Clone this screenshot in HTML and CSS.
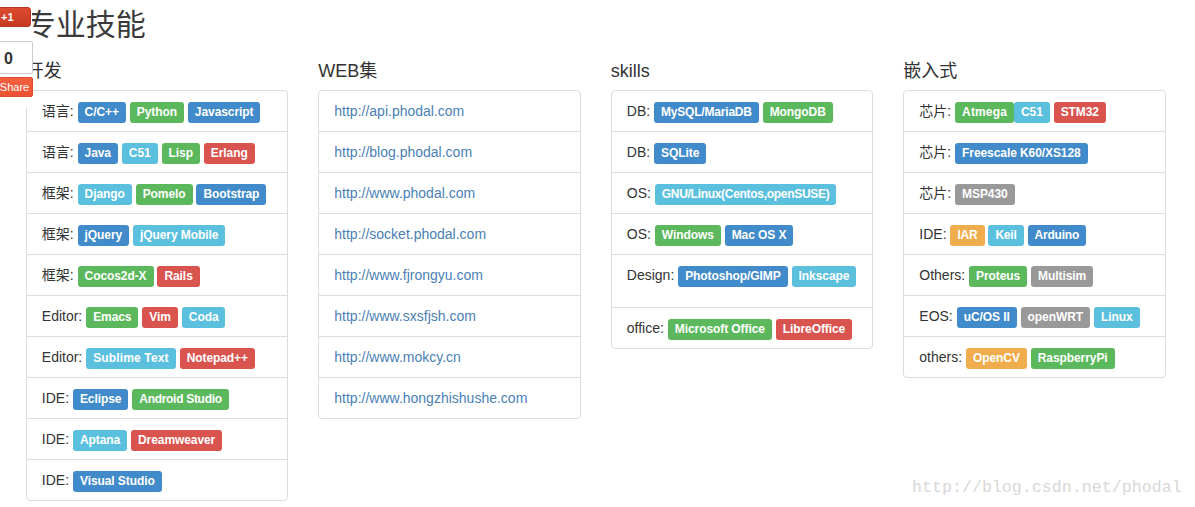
FILE: index.html
```html
<!DOCTYPE html>
<html lang="zh">
<head>
<meta charset="utf-8">
<title>专业技能</title>
<link rel="stylesheet" href="styles.css">
</head>
<body>
<aside class="share">
  <div class="plus">+1</div>
  <div class="count">0</div>
  <div class="sharebtn">Share</div>
</aside>
<main class="page">
  <h1>专业技能</h1>
  <div class="cols">
    <section class="col">
      <h3>开发</h3>
      <ul class="panel">
        <li>语言: <b class="l blue">C/C++</b> <b class="l green">Python</b> <b class="l blue">Javascript</b></li>
        <li>语言: <b class="l blue">Java</b> <b class="l cyan">C51</b> <b class="l green">Lisp</b> <b class="l red">Erlang</b></li>
        <li>框架: <b class="l cyan">Django</b> <b class="l green">Pomelo</b> <b class="l blue">Bootstrap</b></li>
        <li>框架: <b class="l blue">jQuery</b> <b class="l cyan">jQuery Mobile</b></li>
        <li>框架: <b class="l green">Cocos2d-X</b> <b class="l red">Rails</b></li>
        <li>Editor: <b class="l green">Emacs</b> <b class="l red">Vim</b> <b class="l cyan">Coda</b></li>
        <li>Editor: <b class="l cyan wide">Sublime Text</b> <b class="l red">Notepad++</b></li>
        <li>IDE: <b class="l blue">Eclipse</b> <b class="l green tight">Android Studio</b></li>
        <li>IDE: <b class="l cyan">Aptana</b> <b class="l red">Dreamweaver</b></li>
        <li>IDE: <b class="l blue">Visual Studio</b></li>
      </ul>
    </section>
    <section class="col">
      <h3>WEB集</h3>
      <ul class="panel links">
        <li><a href="#">http://api.phodal.com</a></li>
        <li><a href="#">http://blog.phodal.com</a></li>
        <li><a href="#">http://www.phodal.com</a></li>
        <li><a href="#">http://socket.phodal.com</a></li>
        <li><a href="#">http://www.fjrongyu.com</a></li>
        <li><a href="#">http://www.sxsfjsh.com</a></li>
        <li><a href="#">http://www.mokcy.cn</a></li>
        <li><a href="#">http://www.hongzhishushe.com</a></li>
      </ul>
    </section>
    <section class="col">
      <h3>skills</h3>
      <ul class="panel">
        <li>DB: <b class="l blue snug">MySQL/MariaDB</b> <b class="l green">MongoDB</b></li>
        <li>DB: <b class="l blue">SQLite</b></li>
        <li>OS: <b class="l cyan tight">GNU/Linux(Centos,openSUSE)</b></li>
        <li>OS: <b class="l green">Windows</b> <b class="l blue">Mac OS X</b></li>
        <li class="tall">Design: <b class="l blue">Photoshop/GIMP</b> <b class="l cyan">Inkscape</b></li>
        <li>office: <b class="l green">Microsoft Office</b> <b class="l red">LibreOffice</b></li>
      </ul>
    </section>
    <section class="col">
      <h3>嵌入式</h3>
      <ul class="panel">
        <li>芯片: <b class="l green wide">Atmega</b><b class="l cyan">C51</b> <b class="l red">STM32</b></li>
        <li>芯片: <b class="l blue">Freescale K60/XS128</b></li>
        <li>芯片: <b class="l gray">MSP430</b></li>
        <li>IDE: <b class="l orange snug">IAR</b> <b class="l cyan snug">Keil</b> <b class="l blue snug">Arduino</b></li>
        <li>Others: <b class="l green">Proteus</b> <b class="l gray">Multisim</b></li>
        <li>EOS: <b class="l blue">uC/OS II</b> <b class="l gray">openWRT</b> <b class="l cyan">Linux</b></li>
        <li>others: <b class="l orange">OpenCV</b> <b class="l green">RaspberryPi</b></li>
      </ul>
    </section>
  </div>
</main>
<div class="mark">http://blog.csdn.net/phodal</div>
</body>
</html>
```
FILE: styles.css
```css
* { box-sizing: border-box; }
html, body { margin: 0; height: 507px; overflow: hidden; background: #fff; }
body { font: 14px/20px "Liberation Sans", "Noto Sans CJK SC", sans-serif; color: #333; }
.page { padding: 0 0 0 25.8px; }
h1 { margin: 0; font-size: 30px; font-weight: 400; line-height: 50px; height: 52px; color: #3a3a3a; }
.cols { display: flex; gap: 30px; }
.col { width: 262.5px; flex: none; }
h3 { margin: 0; font-size: 18px; font-weight: 400; line-height: 20px; height: 38px; padding-top: 9px; }
.panel { list-style: none; margin: 0; padding: 0; border: 1px solid #ddd; border-radius: 4px; background: #fff; }
.panel li { padding: 10px 15px; height: 41px; border-bottom: 1px solid #ddd; white-space: nowrap; }
.panel li:last-child { border-bottom: 0; height: 40px; }
.panel li.tall { height: 53px; }
.panel a { color: #4a7fb5; text-decoration: none; }
.l { display: inline-block; padding: 0 7px; height: 21px; font-size: 12px; letter-spacing: -0.08px; line-height: 20px; font-weight: 700; color: #fff; border-radius: 3px; margin-top: 1px; }
.snug { letter-spacing: -0.2px; }
.tight { letter-spacing: -0.3px; }
.wide { letter-spacing: 0.15px; }
.blue { background: #428bca; }
.green { background: #5cb85c; }
.cyan { background: #5bc0de; }
.red { background: #d9534f; }
.gray { background: #999; }
.orange { background: #f0ad4e; }
.share { position: absolute; z-index: 2; left: 0; top: 0; width: 32px; height: 108px; background: #fff; }
.plus { position: absolute; left: -4px; top: 7px; width: 35px; height: 20px; background: linear-gradient(#dd4b2f, #c53a22); border: 1px solid #b5351f; border-radius: 3px; color: #fff; font-size: 11px; font-weight: 700; line-height: 18px; padding-left: 4px; }
.count { position: absolute; left: -1px; top: 41px; width: 34px; height: 33px; background: #fff; border: 1px solid #ccc; border-radius: 2px; color: #333; font-size: 16px; font-weight: 700; line-height: 33px; padding-left: 4px; }
.sharebtn { position: absolute; left: -4px; top: 77px; width: 37px; height: 20px; background: linear-gradient(#f4603f, #ec5233); border: 1px solid #e04b2e; border-radius: 2px; color: #fff; font-size: 11px; line-height: 19px; text-align: center; }
.mark { position: absolute; left: 912px; top: 477px; font: 16.65px/22px "Liberation Mono", monospace; color: #d8d8d8; white-space: nowrap; }
```
